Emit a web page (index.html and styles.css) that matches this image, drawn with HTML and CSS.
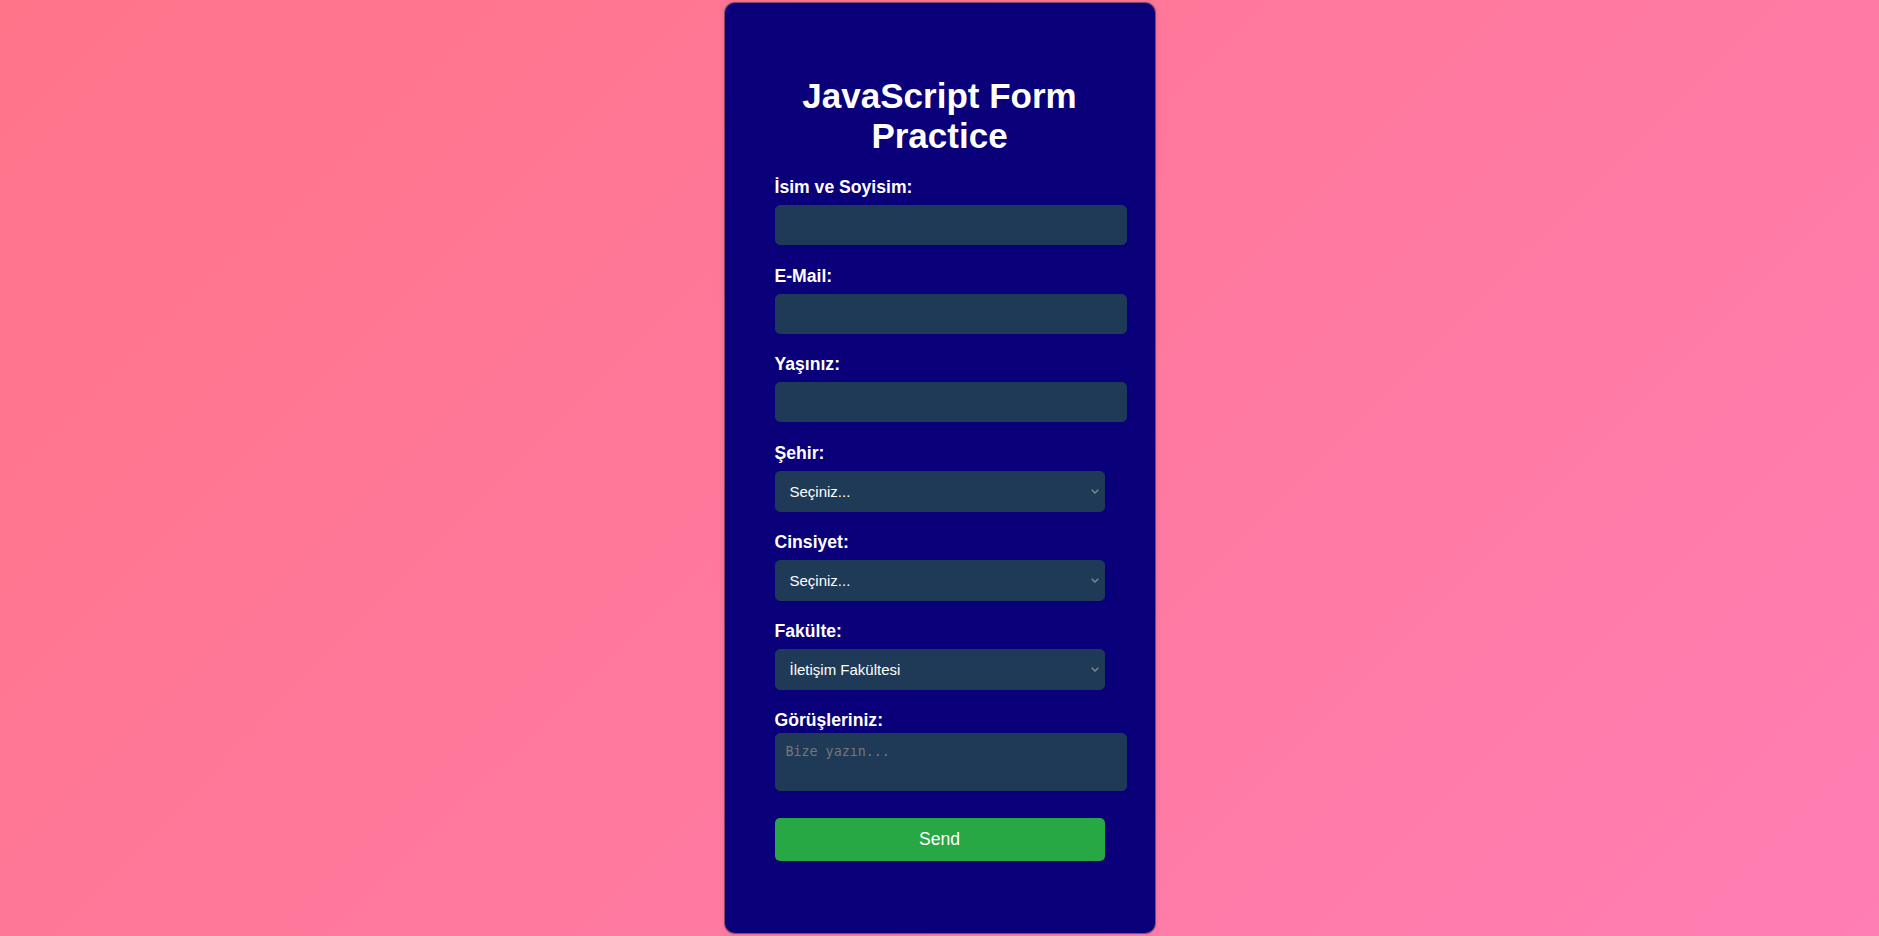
FILE: index.html
```html
<!DOCTYPE html>
<html lang="tr">
<head>
<meta charset="utf-8">
<title>JavaScript Form Practice</title>
<link rel="stylesheet" href="styles.css">
</head>
<body>
<div class="card">
  <h1 class="title">JavaScript Form Practice</h1>
  <form class="form">
    <label class="label" for="name">İsim ve Soyisim:</label>
    <input class="field" type="text" id="name">

    <label class="label" for="email">E-Mail:</label>
    <input class="field" type="email" id="email">

    <label class="label" for="age">Yaşınız:</label>
    <input class="field" type="number" id="age">

    <label class="label" for="city">Şehir:</label>
    <select class="select" id="city">
      <option>Seçiniz...</option>
      <option>İstanbul</option>
      <option>Ankara</option>
      <option>İzmir</option>
    </select>

    <label class="label" for="gender">Cinsiyet:</label>
    <select class="select" id="gender">
      <option>Seçiniz...</option>
      <option>Kadın</option>
      <option>Erkek</option>
    </select>

    <label class="label" for="faculty">Fakülte:</label>
    <select class="select" id="faculty">
      <option>İletişim Fakültesi</option>
      <option>Mühendislik Fakültesi</option>
      <option>Tıp Fakültesi</option>
    </select>

    <label class="label label-tight" for="comments">Görüşleriniz:</label>
    <textarea class="textarea" id="comments" placeholder="Bize yazın..."></textarea>

    <button class="send" type="button">Send</button>
  </form>
</div>
</body>
</html>
```

FILE: styles.css
```css
* {
  margin: 0;
  padding: 0;
}

html, body {
  height: 100%;
}

body {
  margin: 0;
  height: 100vh;
  overflow: hidden;
  display: flex;
  justify-content: center;
  align-items: center;
  background: linear-gradient(135deg, #ff7489, #ff7eb3);
  font-family: "Liberation Sans", Arial, sans-serif;
  color: #ffffff;
}

.card {
  width: 330px;
  padding: 50px;
  background: #09007a;
  border-radius: 10px;
  box-shadow: 0 0 0 1px rgba(40, 40, 70, 0.55), 0 0 6px rgba(0, 0, 0, 0.15);
  flex-shrink: 0;
}

.title {
  font-size: 35px;
  font-weight: bold;
  text-align: center;
  line-height: normal;
  margin: 23.2px 0 21px;
  color: #ffffff;
}

.form {
  display: block;
}

.label {
  display: block;
  font-size: 17.6px;
  font-weight: bold;
  line-height: normal;
  margin-bottom: 7px;
  color: #ffffff;
}

.label-tight {
  margin-bottom: 2.5px;
}

.field {
  display: block;
  box-sizing: content-box;
  width: 100%;
  padding: 10px;
  border: 1px solid #1e3a56;
  border-radius: 5px;
  background: #1e3a56;
  color: #ffffff;
  font-family: "Liberation Sans", Arial, sans-serif;
  font-size: 16px;
  line-height: normal;
  margin-bottom: 20.5px;
  outline: none;
}

.select {
  display: block;
  box-sizing: border-box;
  width: 100%;
  height: 41px;
  padding: 0 20px 0 14px;
  border: 1px solid #1e3a56;
  border-radius: 5px;
  background-color: #1e3a56;
  background-image: url("data:image/svg+xml;utf8,<svg xmlns='http://www.w3.org/2000/svg' width='8' height='5' viewBox='0 0 8 5'><path d='M0.7 0.7 L4 4 L7.3 0.7' fill='none' stroke='%23808894' stroke-width='1.4'/></svg>");
  background-repeat: no-repeat;
  background-position: right 5px center;
  background-size: 8px 5px;
  -webkit-appearance: none;
  appearance: none;
  color: #ffffff;
  font-family: "Liberation Sans", Arial, sans-serif;
  font-size: 15px;
  margin-bottom: 20px;
  outline: none;
}

.textarea {
  display: block;
  box-sizing: content-box;
  width: 100%;
  height: 36px;
  padding: 10px;
  border: 1px solid #1e3a56;
  border-radius: 5px;
  background: #1e3a56;
  color: #ffffff;
  font-family: "DejaVu Sans Mono", "Liberation Mono", monospace;
  font-size: 13.33px;
  resize: none;
  margin-bottom: 27px;
  outline: none;
}

.textarea::placeholder {
  color: #767676;
}

.send {
  display: block;
  width: 100%;
  height: 43px;
  border: none;
  border-radius: 5px;
  background: #28a745;
  color: #ffffff;
  font-family: "Liberation Sans", Arial, sans-serif;
  font-size: 17.6px;
  margin-bottom: 22px;
  cursor: pointer;
}
```
